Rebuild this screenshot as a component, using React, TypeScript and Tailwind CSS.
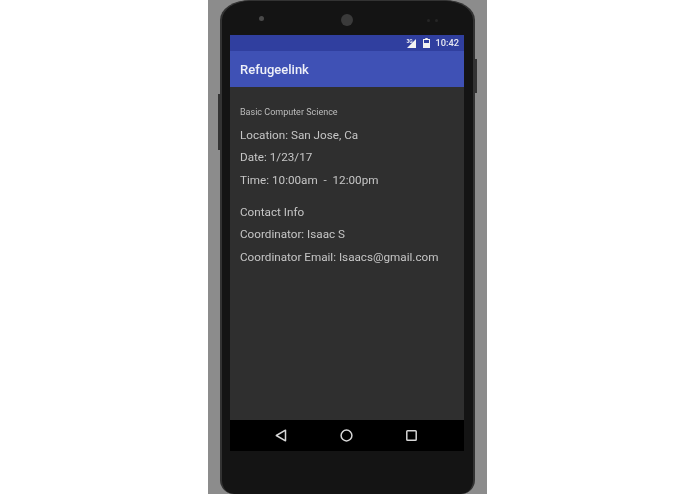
const font = "font-['Roboto',sans-serif]"

function StatusBar() {
  return (
    <div className="h-4 bg-[#303f9f] flex items-center justify-end pr-[5px] gap-[5px]">
      <div className="relative w-[10px] h-[9px] mr-[2px]">
        <span className="absolute -top-[1px] left-0 text-[5px] leading-[6px] font-bold text-[#e8e9f2]">3G</span>
        <svg width="10" height="9" viewBox="0 0 10 9" aria-hidden="true">
          <path d="M10 0v9H1z" fill="#f2f2f2" />
        </svg>
      </div>
      <svg width="7" height="10" viewBox="0 0 7 10" aria-hidden="true">
        <path d="M2.3 0h2.4v1H7v9H0V1h2.3z" fill="#f2f2f2" />
        <path d="M1 2h5v3H1z" fill="#303f9f" />
      </svg>
      <span className="text-[9.3px] leading-none font-medium text-[#e8e9f2]">10:42</span>
    </div>
  )
}

function NavBar() {
  return (
    <div className="h-[31px] bg-black flex items-center justify-center gap-[53px] pr-[2px]">
      <svg width="12" height="13" viewBox="0 0 12 13" fill="none" stroke="#d6d6d6" strokeWidth="1.5" strokeLinejoin="round" aria-hidden="true">
        <path d="M10.5 1.2v10.6L1.3 6.5z" />
      </svg>
      <svg width="13" height="13" viewBox="0 0 13 13" fill="none" stroke="#d6d6d6" strokeWidth="1.5" aria-hidden="true">
        <circle cx="6.5" cy="6.5" r="5.4" />
      </svg>
      <svg width="11" height="11" viewBox="0 0 11 11" fill="none" stroke="#d6d6d6" strokeWidth="1.5" aria-hidden="true">
        <rect x="0.8" y="0.8" width="9.4" height="9.4" rx="0.8" />
      </svg>
    </div>
  )
}

function Screen() {
  const rowClass = "text-[11.7px] leading-[15px] text-[#c6c6c6] whitespace-pre"
  return (
    <div className="w-[234px] h-[416px] flex flex-col">
      <StatusBar />
      <div className="h-[36px] bg-[#3f51b5] flex items-center pl-[10px] pt-[2px]">
        <span className="text-[13px] font-medium text-[#eef0f8]">Refugeelink</span>
      </div>
      <div className="flex-1 bg-[#2f2f2f] pl-[10px] pt-[20px] flex flex-col">
        <p className="text-[9px] leading-[11px] text-[#bdbdbd]">Basic Computer Science</p>
        <p className={`${rowClass} mt-[10px]`}>Location: San Jose, Ca</p>
        <p className={`${rowClass} mt-[7px]`}>Date: 1/23/17</p>
        <p className={`${rowClass} mt-[8px]`}>Time: 10:00am  -  12:00pm</p>
        <p className={`${rowClass} mt-[17px]`}>Contact Info</p>
        <p className={`${rowClass} mt-[7px]`}>Coordinator: Isaac S</p>
        <p className={`${rowClass} mt-[8px]`}>Coordinator Email: Isaacs@gmail.com</p>
      </div>
      <NavBar />
    </div>
  )
}

export default function App() {
  return (
    <div className={`${font} w-[695px] h-[494px] bg-white flex justify-center overflow-hidden blur-[0.4px]`}>
      <div className="w-[279px] h-full bg-[#8c8c8c] pl-[12px]">
        <div className="relative w-[255px] h-[494px] rounded-[30px_30px_14px_14px/20px_20px_14px_14px] bg-[#141414] border-x-[2px] border-t-[1px] border-[#333333] flex flex-col pl-[8px] pt-[34px]">
          <div className="absolute top-[15px] left-[37px] w-[5px] h-[5px] rounded-full bg-[#4a4a4a]" />
          <div className="absolute top-[13px] left-[119px] w-[12px] h-[12px] rounded-full bg-[#3a3a3a]" />
          <div className="absolute top-[18px] left-[205px] w-[3px] h-[3px] rounded-full bg-[#262626]" />
          <div className="absolute top-[18px] left-[213px] w-[3px] h-[3px] rounded-full bg-[#262626]" />
          <div className="absolute top-[58px] -right-[4px] w-[2px] h-[34px] bg-[#333333]" />
          <div className="absolute top-[93px] -left-[4px] w-[2px] h-[56px] bg-[#333333]" />
          <Screen />
        </div>
      </div>
    </div>
  )
}
